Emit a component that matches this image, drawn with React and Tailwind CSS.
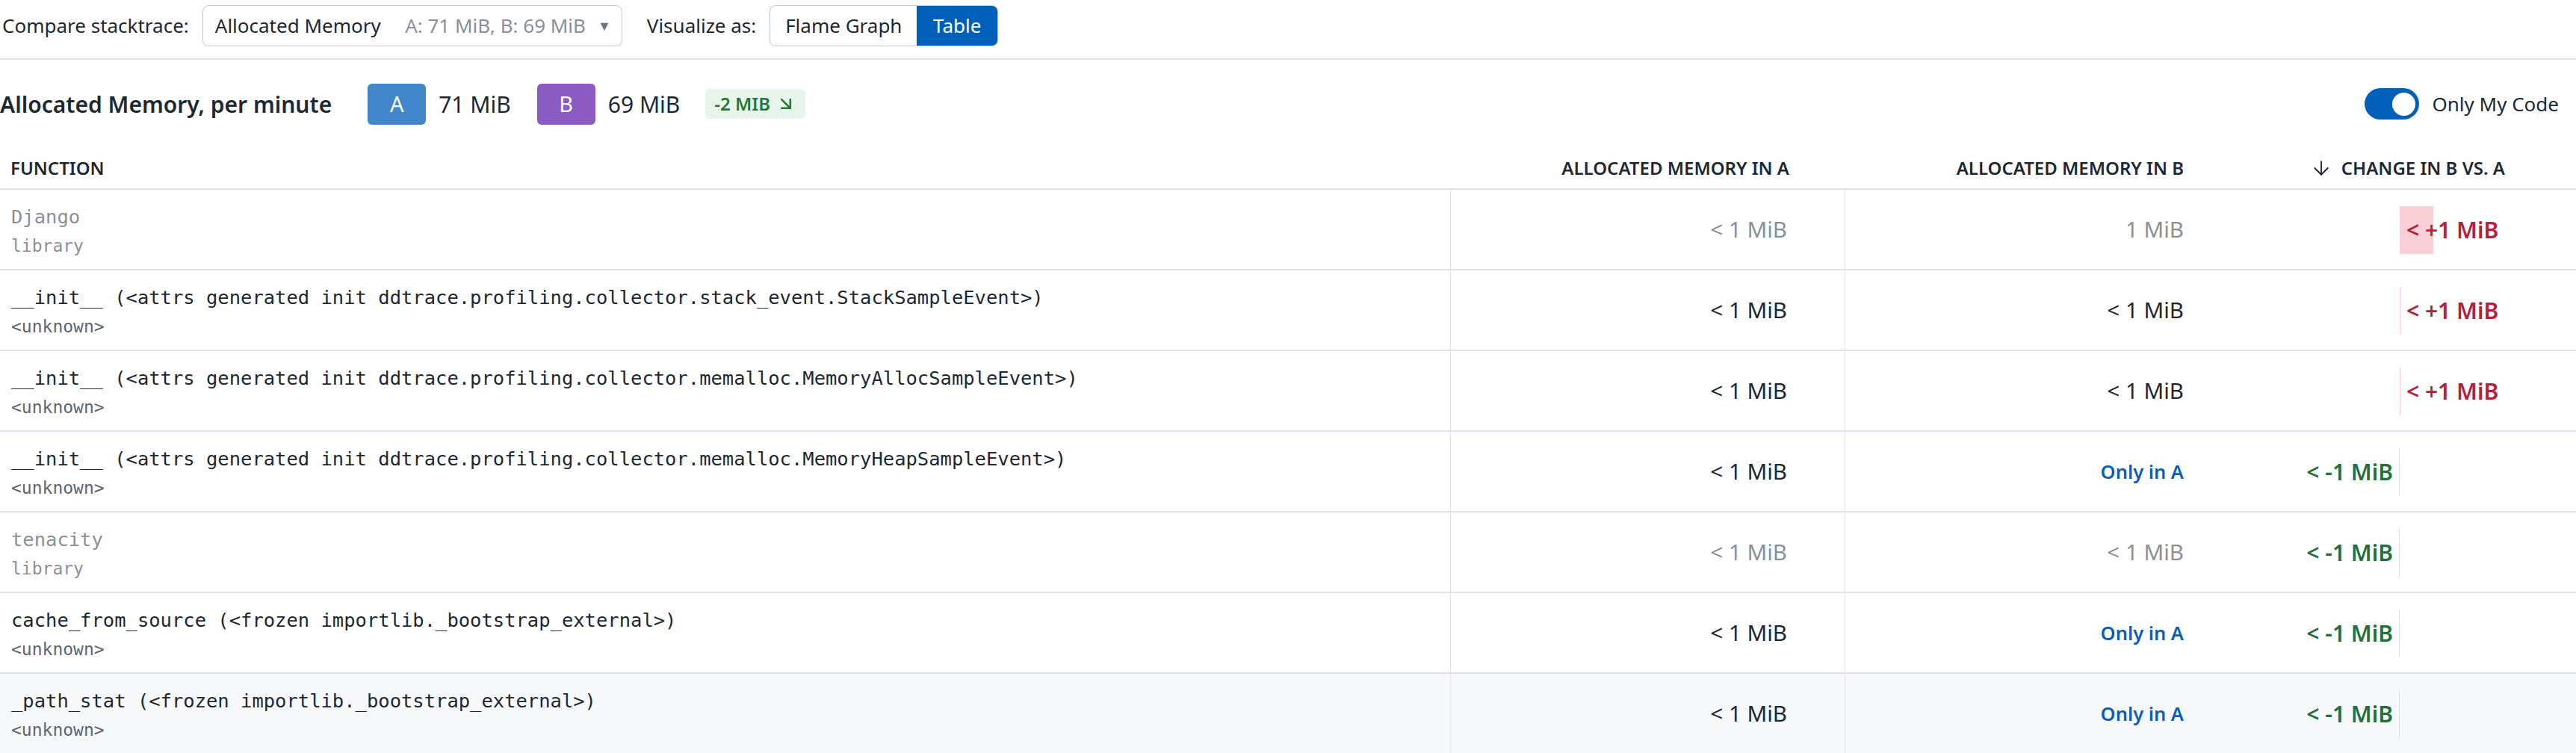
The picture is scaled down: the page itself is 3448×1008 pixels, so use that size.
import React from 'react';
import { ArrowDownRight, ArrowDown } from 'lucide-react';

const rows = [
  { fn: 'Django', sub: 'library', lib: true, a: '< 1 MiB', b: '1 MiB', change: '< +1 MiB', dir: 'up', bar: 45 },
  { fn: '__init__ (<attrs generated init ddtrace.profiling.collector.stack_event.StackSampleEvent>)', sub: '<unknown>', a: '< 1 MiB', b: '< 1 MiB', change: '< +1 MiB', dir: 'up', bar: 1 },
  { fn: '__init__ (<attrs generated init ddtrace.profiling.collector.memalloc.MemoryAllocSampleEvent>)', sub: '<unknown>', a: '< 1 MiB', b: '< 1 MiB', change: '< +1 MiB', dir: 'up', bar: 1 },
  { fn: '__init__ (<attrs generated init ddtrace.profiling.collector.memalloc.MemoryHeapSampleEvent>)', sub: '<unknown>', a: '< 1 MiB', b: 'Only in A', change: '< -1 MiB', dir: 'down', bar: 1 },
  { fn: 'tenacity', sub: 'library', lib: true, a: '< 1 MiB', b: '< 1 MiB', change: '< -1 MiB', dir: 'down', bar: 1 },
  { fn: 'cache_from_source (<frozen importlib._bootstrap_external>)', sub: '<unknown>', a: '< 1 MiB', b: 'Only in A', change: '< -1 MiB', dir: 'down', bar: 1 },
  { fn: '_path_stat (<frozen importlib._bootstrap_external>)', sub: '<unknown>', a: '< 1 MiB', b: 'Only in A', change: '< -1 MiB', dir: 'down', bar: 1, hover: true },
];

const sans = "font-['Noto_Sans',sans-serif]";
const mono = "font-['DejaVu_Sans_Mono',monospace]";

function Value({ v, lib }) {
  if (v === 'Only in A') {
    return <span className="text-[25.5px] font-semibold text-[#0a5fb4]">Only in A</span>;
  }
  return <span className={`text-[29.5px] ${lib ? 'text-[#8a9099]' : 'text-[#1c2832]'}`}>{v}</span>;
}

// diverging bar around the column's zero axis
function Change({ row }) {
  const up = row.dir === 'up';
  return (
    <div className="flex h-full items-center">
      <div className="relative flex h-full w-[215px] items-center justify-end">
        {!up && (
          <>
            <div className="absolute right-0 top-[22px] h-[64px] bg-[#cfe9d5]" style={{ width: row.bar }} />
            <span className="relative pr-[9px] text-[30px] font-semibold text-[#22703a]">{row.change}</span>
          </>
        )}
      </div>
      <div className="relative flex h-full w-[215px] items-center justify-start">
        {up && (
          <>
            <div className="absolute left-0 top-[22px] h-[64px] bg-[#f8d0d6]" style={{ width: row.bar }} />
            <span className="relative pl-[9px] text-[30px] font-semibold text-[#b3213a]">{row.change}</span>
          </>
        )}
      </div>
    </div>
  );
}

export default function App() {
  return (
    <div className={`${sans} w-[3448px] h-[1008px] overflow-hidden bg-white text-[#1c2832]`}>
      {/* compare bar */}
      <div className="flex items-center h-[80px] pb-[9px] pl-[3px] border-b-2 border-[#e1e4ec] text-[26px]">
        <span>Compare stacktrace:</span>
        <div className="ml-[18px] flex h-[55px] w-[562px] items-center rounded-[8px] border-[1.5px] border-[#bfc6d6] pl-[16px] pr-[14px]">
          <span>Allocated Memory</span>
          <span className="ml-auto text-[#8a9099]">A: 71 MiB, B: 69 MiB</span>
          <span className="ml-[16px] text-[18px] text-[#6b7380]">▼</span>
        </div>
        <span className="ml-[33px]">Visualize as:</span>
        <div className="ml-[18px] flex h-[55px] overflow-hidden rounded-[8px] border-[1.5px] border-[#bfc6d6]">
          <div className="flex w-[196px] items-center justify-center">Flame Graph</div>
          <div className="flex w-[108px] items-center justify-center bg-[#0060b9] text-white">Table</div>
        </div>
      </div>

      {/* title */}
      <div className="flex h-[118px] items-center pr-[23px]">
        <span className="text-[30px] font-semibold">Allocated Memory, per minute</span>
        <span className="ml-[48px] flex h-[55px] w-[78px] items-center justify-center rounded-[6px] bg-[#4287c9] text-[29px] text-white">A</span>
        <span className="ml-[17px] text-[30px]">71 MiB</span>
        <span className="ml-[35px] flex h-[55px] w-[78px] items-center justify-center rounded-[6px] bg-[#8a5bc1] text-[29px] text-white">B</span>
        <span className="ml-[17px] text-[30px]">69 MiB</span>
        <span className="ml-[34px] flex h-[40px] items-center gap-[7px] rounded-[6px] bg-[#e7f5ea] px-[12px] text-[24px] font-semibold text-[#27763b]">
          -2 MIB <ArrowDownRight size={28} strokeWidth={2.2} />
        </span>
        <div className="ml-auto flex items-center">
          <div className="flex h-[42px] w-[73px] items-center justify-end rounded-full bg-[#0060b9] pr-[5px]">
            <div className="h-[31px] w-[31px] rounded-full bg-white" />
          </div>
          <span className="ml-[17px] text-[26px]">Only My Code</span>
        </div>
      </div>

      {/* table */}
      <div className="grid grid-cols-[1941px_528px_528px_451px]">
        <div className="flex h-[56px] items-center border-b-2 border-[#dfe2ea] pl-[14px] text-[24px] font-semibold">FUNCTION</div>
        <div className="flex h-[56px] items-center justify-end border-b-2 border-[#dfe2ea] pr-[74px] text-[24px] font-semibold">ALLOCATED MEMORY IN A</div>
        <div className="flex h-[56px] items-center justify-end border-b-2 border-[#dfe2ea] pr-[74px] text-[24px] font-semibold">ALLOCATED MEMORY IN B</div>
        <div className="flex h-[56px] items-center justify-end gap-[12px] border-b-2 border-[#dfe2ea] pr-[95px] text-[24px] font-semibold">
          <ArrowDown size={30} strokeWidth={1.5} />
          CHANGE IN B VS. A
        </div>

        {rows.map((r, i) => {
          const bg = r.hover ? 'bg-[#f7f8fa]' : 'bg-white';
          return (
            <React.Fragment key={i}>
              <div className={`${bg} ${mono} flex h-[108px] flex-col border-b-2 border-[#dfe2ea] pl-[15px] pt-[20px]`}>
                <span className={`text-[25.5px] leading-[32px] ${r.lib ? 'text-[#8b9098]' : 'text-[#1c2832]'}`}>{r.fn}</span>
                <span className={`mt-[7px] text-[23px] leading-[32px] ${r.lib ? 'text-[#8b9098]' : 'text-[#5d6570]'}`}>{r.sub}</span>
              </div>
              <div className={`${bg} flex h-[108px] items-center justify-end border-b-2 border-l border-[#dfe2ea] border-l-[#e4e6ee] pr-[77px]`}>
                <Value v={r.a} lib={r.lib} />
              </div>
              <div className={`${bg} flex h-[108px] items-center justify-end border-b-2 border-l border-[#dfe2ea] border-l-[#e4e6ee] pr-[74px]`}>
                <Value v={r.b} lib={r.lib} />
              </div>
              <div className={`${bg} h-[108px] border-b-2 border-[#dfe2ea]`}>
                <Change row={r} />
              </div>
            </React.Fragment>
          );
        })}
      </div>
    </div>
  );
}
